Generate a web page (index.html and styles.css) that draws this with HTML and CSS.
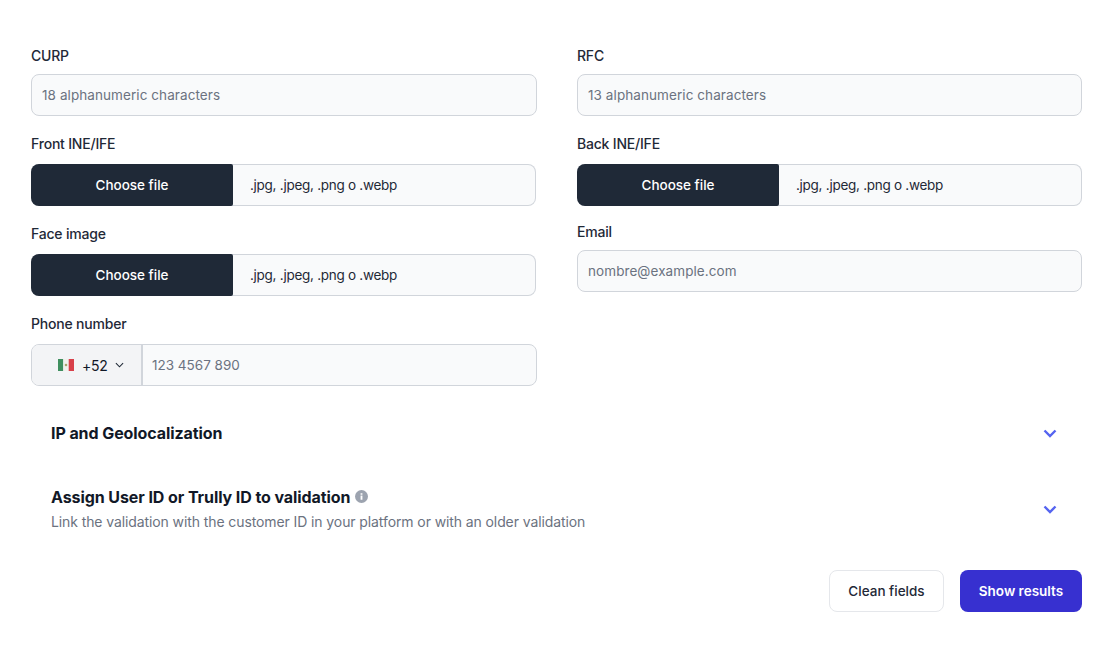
FILE: index.html
```html
<!DOCTYPE html>
<html lang="en">
<head>
<meta charset="utf-8">
<title>Validation form</title>
<link rel="stylesheet" href="styles.css">
</head>
<body>
<main class="page">
  <div class="columns">
    <div class="col">
      <div class="field">
        <label class="label">CURP</label>
        <input class="input" placeholder="18 alphanumeric characters">
      </div>
      <div class="field field-file">
        <label class="label">Front INE/IFE</label>
        <div class="file"><span class="file-btn">Choose file</span><span class="file-hint">.jpg, .jpeg, .png o .webp</span></div>
      </div>
      <div class="field field-file">
        <label class="label">Face image</label>
        <div class="file"><span class="file-btn">Choose file</span><span class="file-hint">.jpg, .jpeg, .png o .webp</span></div>
      </div>
      <div class="field field-file">
        <label class="label">Phone number</label>
        <div class="phone">
          <div class="dial">
            <svg class="flag" viewBox="0 0 16 12" width="16" height="12"><rect width="5.3" height="12" fill="#3f8f5f"/><rect x="5.3" width="5.4" height="12" fill="#f1f1ec"/><rect x="10.7" width="5.3" height="12" fill="#d8404a"/><circle cx="8" cy="6" r="1.3" fill="#a9a36c"/></svg>
            <span>+52</span>
            <svg class="dial-caret" viewBox="0 0 10 6" width="9" height="6"><path d="M1 1l4 4 4-4" fill="none" stroke="#1f2937" stroke-width="1.200"/></svg>
          </div>
          <input class="phone-input" placeholder="123 4567 890">
        </div>
      </div>
    </div>
    <div class="col">
      <div class="field">
        <label class="label">RFC</label>
        <input class="input" placeholder="13 alphanumeric characters">
      </div>
      <div class="field field-file">
        <label class="label">Back INE/IFE</label>
        <div class="file"><span class="file-btn">Choose file</span><span class="file-hint">.jpg, .jpeg, .png o .webp</span></div>
      </div>
      <div class="field field-email">
        <label class="label">Email</label>
        <input class="input" placeholder="nombre@example.com">
      </div>
    </div>
  </div>
  <section class="accordion acc-ip">
    <h3 class="acc-title">IP and Geolocalization</h3>
    <svg class="chev" viewBox="0 0 14 9" width="14" height="9"><path d="M1.500 1.500L7 7l5.500-5.500" fill="none" stroke="#5564f0" stroke-width="2.400"/></svg>
  </section>
  <section class="accordion acc-id">
    <div>
      <h3 class="acc-title">Assign User ID or Trully ID to validation
        <svg class="info" viewBox="0 0 14 14" width="13" height="13"><circle cx="7" cy="7" r="7" fill="#9ca3af"/><rect x="6" y="6" width="2" height="4.500" fill="#fff"/><rect x="6" y="3.500" width="2" height="1.600" fill="#fff"/></svg>
      </h3>
      <p class="acc-desc">Link the validation with the customer ID in your platform or with an older validation</p>
    </div>
    <svg class="chev" viewBox="0 0 14 9" width="14" height="9"><path d="M1.500 1.500L7 7l5.500-5.500" fill="none" stroke="#5564f0" stroke-width="2.400"/></svg>
  </section>
  <div class="actions">
    <button class="btn btn-light">Clean fields</button>
    <button class="btn btn-primary">Show results</button>
  </div>
</main>
</body>
</html>
```
FILE: styles.css
```css
* { box-sizing: border-box; }
html, body { margin: 0; background: #fff; }
body { font-family: "Inter", "Liberation Sans", sans-serif; font-size: 14px; color: #1f2937; }
.page { width: 1112px; height: 658px; padding: 46px 30px 0 31px; overflow: hidden; }
.columns { display: grid; grid-template-columns: 506px 505px; column-gap: 40px; height: 340px; }
.col { display: flex; flex-direction: column; }
.field { display: flex; flex-direction: column; gap: 8px; }
.field-file { margin-top: 18px; gap: 10px; }
.field-email { margin-top: 16px; gap: 8px; }
.label { font-size: 14px; line-height: 20px; font-weight: 500; color: #1f2937; letter-spacing: -0.2px; }
.input { height: 42px; width: 100%; padding: 0 10px; border: 1px solid #d1d5db; border-radius: 8px; background: #f9fafb; font: inherit; font-size: 13.500px; letter-spacing: 0.08px; outline: none; }
.input::placeholder, .phone-input::placeholder { color: #6b7280; opacity: 1; }
.file { display: flex; height: 42px; width: 505px; border: 1px solid #d1d5db; border-left: 0; border-radius: 8px; background: #f9fafb; }
.file-btn { width: 202px; height: 42px; margin-top: -1px; background: #1f2937; color: #fff; border-radius: 8px 2px 2px 8px; display: flex; align-items: center; justify-content: center; font-size: 13.500px; font-weight: 500; }
.file-hint { display: flex; align-items: center; padding-left: 17px; font-size: 13.500px; color: #1f2937; letter-spacing: -0.27px; }
.phone { display: flex; height: 42px; border: 1px solid #d1d5db; border-radius: 8px; background: #f9fafb; overflow: hidden; }
.dial { width: 111px; padding-left: 26px; background: #f3f4f6; border-right: 2px solid #d1d5db; display: flex; align-items: center; gap: 8px; color: #111827; font-size: 14px; letter-spacing: -0.2px; }
.flag { display: block; }
.dial-caret { margin-left: -1px; }
.phone-input { flex: 1; border: 0; background: transparent; padding: 0 9px; font: inherit; font-size: 13.500px; outline: none; }
.accordion { display: flex; justify-content: space-between; align-items: center; padding: 0 25px 0 20px; }
.acc-ip { height: 40px; margin-top: 27px; }
.acc-id { margin-top: 25px; height: 62px; }
.acc-title { margin: 0; font-size: 16px; line-height: 24px; font-weight: 700; color: #111827; display: flex; align-items: center; gap: 5px; letter-spacing: -0.08px; }
.acc-desc { margin: 0; padding-top: 1px; font-size: 14px; line-height: 24px; color: #6b7280; letter-spacing: -0.1px; }
.chev { flex: none; }
.actions { display: flex; justify-content: flex-end; gap: 16px; margin-top: 30px; }
.btn { height: 42px; border-radius: 8px; font: inherit; font-size: 13.500px; font-weight: 600; }
.btn-light { width: 115px; background: #fff; border: 1px solid #e5e7eb; color: #1f2937; font-weight: 500; }
.btn-primary { width: 122px; background: #3730d0; border: 0; color: #fff; }
```
